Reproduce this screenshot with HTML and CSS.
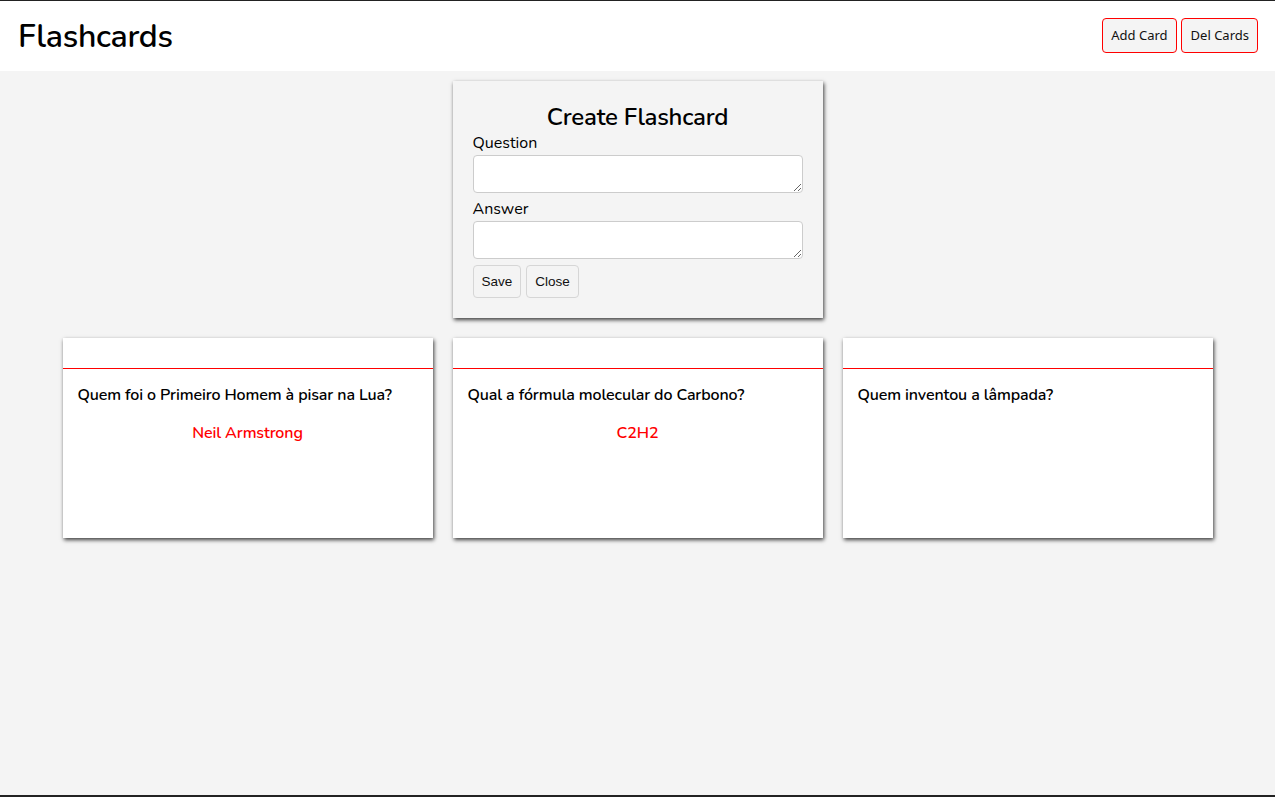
FILE: index.html
```html
<!DOCTYPE html>
<html>
<head>
<meta charset="utf-8">
<link rel="stylesheet" href="styles.css">
</head>
<body>
<div class="page">
  <header class="topbar">
    <h1 class="brand">Flashcards</h1>
    <div class="actions">
      <button class="btn-red">Add Card</button>
      <button class="btn-red">Del Cards</button>
    </div>
  </header>
  <main class="content">
    <section class="create">
      <h2 class="create-title">Create Flashcard</h2>
      <label class="lbl">Question</label>
      <textarea class="field"></textarea>
      <label class="lbl">Answer</label>
      <textarea class="field"></textarea>
      <div class="form-btns">
        <button class="btn-grey">Save</button>
        <button class="btn-grey">Close</button>
      </div>
    </section>
    <section class="cards">
      <article class="card">
        <div class="card-head"></div>
        <div class="card-body">
          <p class="q">Quem foi o Primeiro Homem à pisar na Lua?</p>
          <p class="a">Neil Armstrong</p>
        </div>
      </article>
      <article class="card">
        <div class="card-head"></div>
        <div class="card-body">
          <p class="q">Qual a fórmula molecular do Carbono?</p>
          <p class="a">C2H2</p>
        </div>
      </article>
      <article class="card">
        <div class="card-head"></div>
        <div class="card-body">
          <p class="q">Quem inventou a lâmpada?</p>
        </div>
      </article>
    </section>
  </main>
</div>
</body>
</html>
```
FILE: styles.css
```css
* { box-sizing: border-box; }
html, body { margin: 0; height: 100%; }
body {
  background: #f4f4f4;
  font-family: "Nunito", "Lato", "Noto Sans", sans-serif;
  color: #000;
}
.page {
  height: 797px;
  border-top: 1px solid #222;
  border-bottom: 2px solid #222;
  display: flex;
  flex-direction: column;
}
.topbar {
  background: #fff;
  height: 70px;
  display: flex;
  align-items: center;
  justify-content: space-between;
  padding: 0 17px 0 18px;
}
.brand {
  margin: 0;
  font-size: 32px;
  font-weight: 600;
  letter-spacing: -0.3px;
}
.actions { display: flex; gap: 4px; margin-top: -2px; }
.btn-red {
  background: #f4f4f4;
  border: 1px solid #ff0000;
  border-radius: 4px;
  height: 35px;
  padding: 0 8px;
  font-family: "Noto Sans", "Open Sans", sans-serif;
  font-size: 13px;
  color: #111;
}
.btn-red:last-child { padding: 0 8px 0 9px; }
.content {
  flex: 1;
  display: flex;
  flex-direction: column;
  align-items: center;
  padding-top: 10px;
}
.create {
  width: 370px;
  background: #f4f4f4;
  box-shadow: 1px 2px 4px rgba(0,0,0,0.75);
  padding: 20px;
  display: flex;
  flex-direction: column;
}
.create-title {
  margin: 0;
  text-align: center;
  font-size: 24px;
  font-weight: 600;
  line-height: 32px;
  letter-spacing: -0.25px;
}
.lbl {
  font-size: 16px;
  line-height: 21px;
}
.field {
  width: 330px;
  height: 38px;
  border: 1px solid #ccc;
  border-radius: 4px;
  background: #fff;
  margin: 1px 0 6px;
  resize: vertical;
}
.form-btns { display: flex; gap: 5px; }
.btn-grey {
  background: #f4f4f4;
  border: 1px solid #d6d6d6;
  border-radius: 4px;
  height: 33px;
  padding: 0 8px;
  font-family: "Liberation Sans", Arial, sans-serif;
  font-size: 13.5px;
  color: #111;
}
.cards {
  display: flex;
  gap: 20px;
  margin-top: 20px;
}
.card {
  width: 370px;
  height: 200px;
  background: #fff;
  box-shadow: 1px 2px 4px rgba(0,0,0,0.75);
}
.card-head {
  height: 31px;
  border-bottom: 1px solid #ff0000;
}
.card-body { padding: 16px 15px; }
.q {
  margin: 0;
  font-size: 16px;
  font-weight: 600;
  line-height: 20px;
  letter-spacing: -0.12px;
}
.a {
  margin: 18px 0 0;
  text-align: center;
  color: #ff0000;
  font-size: 16px;
  font-weight: 600;
  line-height: 20px;
  letter-spacing: -0.12px;
}
```
